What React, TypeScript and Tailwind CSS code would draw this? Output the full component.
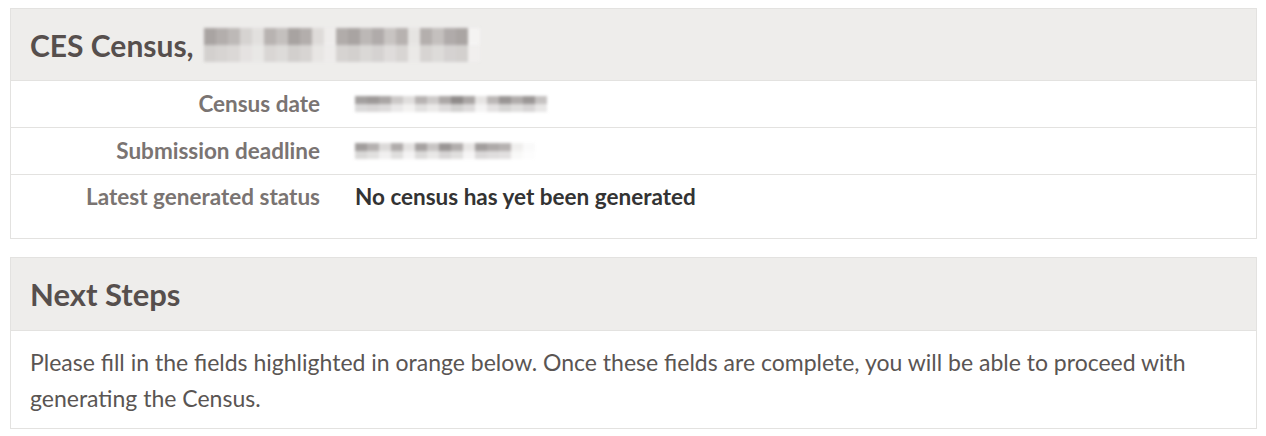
import React from "react";

const font = { fontFamily: "Lato, 'Noto Sans', sans-serif" };

function Blur({ cells, h }: { cells: string[]; h: string }) {
  return (
    <div className={`flex blur-[1.5px] ${h}`}>
      {cells.map((c, i) => (
        <div key={i} className="flex flex-col w-[12px]">
          <div className="flex-1" style={{ background: c }} />
          <div className="flex-1 opacity-40" style={{ background: c }} />
        </div>
      ))}
    </div>
  );
}

const headerCells = ["#a9a4a2", "#b3aeac", "#bdb9b7", "#d6d3d1", "#e2e0de", "#b8b3b1", "#c4c0be", "#a8a3a1", "#b3aeac", "#dedbd9", "#eeeceb", "#b1acaa", "#a9a4a2", "#bcb8b6", "#b0abaa", "#c8c4c2", "#b7b2b0", "#e6e4e2", "#b4afad", "#c4c0be", "#b0abaa", "#aaa5a3", "#f4f3f2"];
const dateCells = ["#a3a09f", "#9d9998", "#aaa6a5", "#cbc8c7", "#e0dedd", "#b7b3b2", "#cdcac9", "#aca8a7", "#8f8b8a", "#aaa6a5", "#e6e4e3", "#bbb7b6", "#999594", "#b0acab", "#9b9796", "#c5c2c1"];
const deadlineCells = ["#a19d9c", "#b5b1b0", "#dcdad9", "#b0acab", "#e4e2e1", "#a6a2a1", "#c8c5c4", "#9a9695", "#b2aead", "#e8e6e5", "#a29e9d", "#aeaaa9", "#b6b2b1", "#f0efee", "#fafafa"];

export default function App() {
  return (
    <div className="bg-white w-[1266px] h-[436px] pl-[10px] pr-[9px] pt-[8px] text-[#555]" style={font}>
      <div className="border border-[#e3e2e0]">
        <div className="h-[72px] bg-[#eeedeb] border-b border-[#e3e2e0] flex items-center pl-[19px] gap-[10px]">
          <h1 className="text-[30px] font-bold text-[#564f4d] leading-none">CES Census,</h1>
          <Blur cells={headerCells} h="h-[34px]" />
        </div>
        <div className="flex flex-col text-[22.5px]">
          <div className="h-[47px] border-b border-[#e3e2e0] flex items-center">
            <div className="w-[309px] text-right font-bold text-[#7a7472]">Census date</div>
            <div className="ml-[35px]"><Blur cells={dateCells} h="h-[16px]" /></div>
          </div>
          <div className="h-[47px] border-b border-[#e3e2e0] flex items-center">
            <div className="w-[309px] text-right font-bold text-[#7a7472]">Submission deadline</div>
            <div className="ml-[35px]"><Blur cells={deadlineCells} h="h-[16px]" /></div>
          </div>
          <div className="h-[63px] flex items-start pt-[5px]">
            <div className="w-[309px] text-right font-bold text-[#7a7472]">Latest generated status</div>
            <div className="ml-[35px] font-bold text-[#333]">No census has yet been generated</div>
          </div>
        </div>
      </div>
      <div className="mt-[18px] border border-[#e3e2e0]">
        <div className="h-[73px] bg-[#eeedeb] border-b border-[#e3e2e0] flex items-center pl-[19px]">
          <h2 className="text-[31px] font-bold text-[#564f4d] leading-none">Next Steps</h2>
        </div>
        <div className="px-[19px] pt-[13px] pb-[12px] text-[23px] leading-[36px] text-[#5a5553]">
          Please fill in the fields highlighted in orange below. Once these fields are complete, you will be able to proceed with
          <br />
          generating the Census.
        </div>
      </div>
    </div>
  );
}
